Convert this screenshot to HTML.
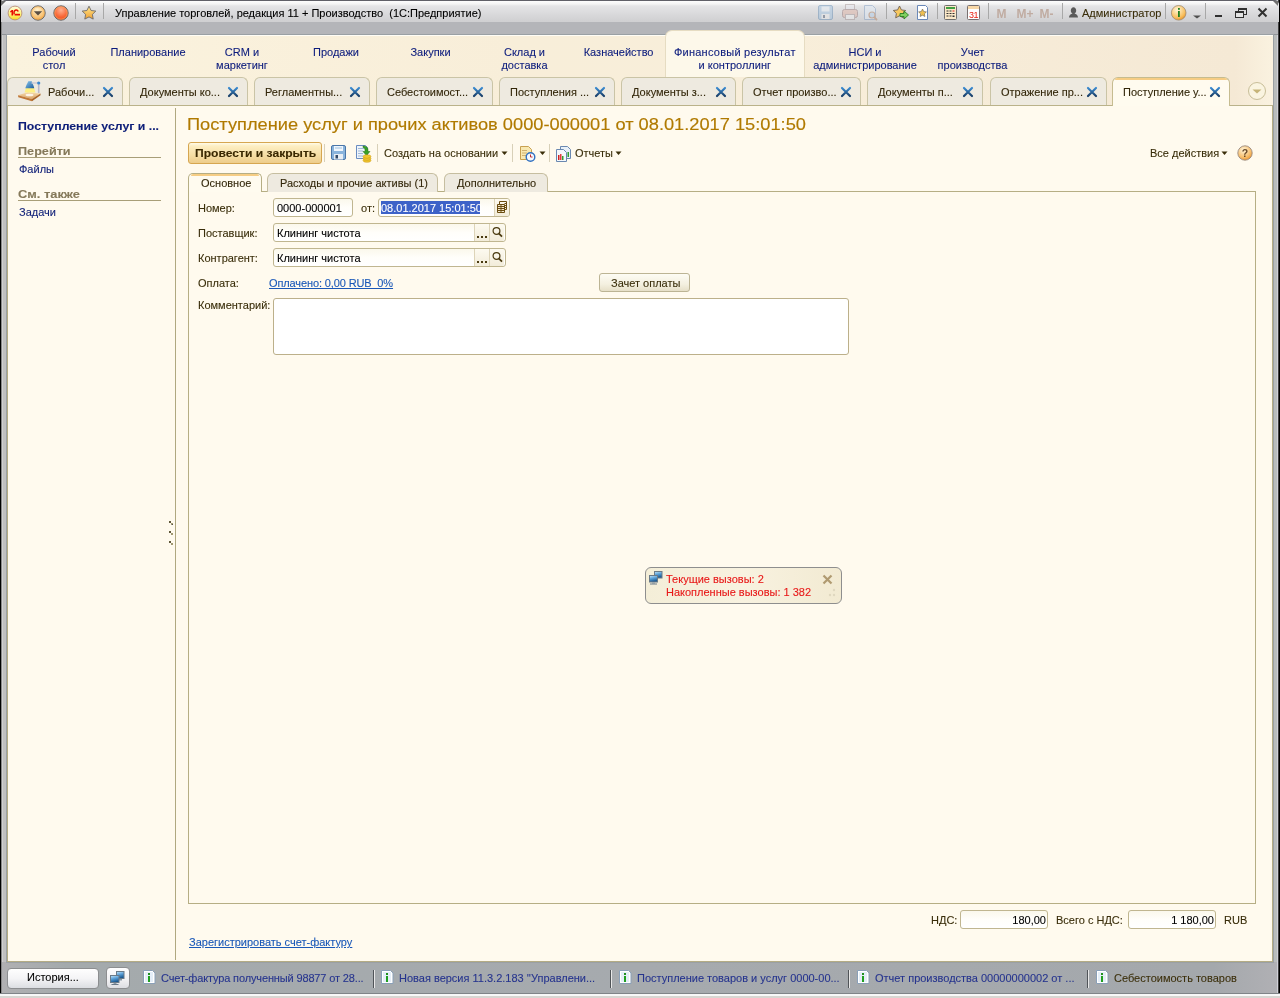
<!DOCTYPE html>
<html><head><meta charset="utf-8">
<style>
*{box-sizing:border-box;margin:0;padding:0}
html,body{width:1280px;height:998px;overflow:hidden}
body{position:relative;background:#b0b2b4;font-family:"Liberation Sans",sans-serif;font-size:11px;color:#3a2e0a}
.a{position:absolute}
svg{position:absolute;overflow:visible}
.t{position:absolute;white-space:pre;line-height:13px;font-size:11px}
/* frame */
#lb{left:0;top:0;width:6px;height:994px;background:linear-gradient(90deg,#000 0,#000 1px,#888 1px,#888 2px,#d0d0d0 2px,#d0d0d0 3px,#c0c0c0 3px)}
#rb{left:1274px;top:0;width:6px;height:994px;background:linear-gradient(90deg,#b8bcbc 0,#b8bcbc 3px,#d0d0d8 3px,#d0d0d8 4px,#404040 4px,#404040 5px,#000 5px)}
#tb{left:1px;top:0;width:1278px;height:22px;border-radius:5px 5px 0 0;background:linear-gradient(#606068 0,#606068 1px,#fdfdfd 1px,#f4f4f4 4px,#e4e4e6 6px,#d0d0d2 21px)}
#tb2{left:2px;top:22px;width:1276px;height:13px;background:#b4b5b9;border-bottom:1px solid #909498}
#lstrip{display:none}
#rstrip{display:none}
#panel{left:6px;top:34px;width:1268px;height:929px;background:#fffaee;border:1px solid #9aa0a4}
#panel2{left:7px;top:35px;width:1266px;height:927px;border:1px solid #b4ac84;border-top:none}
#sect{left:7px;top:35px;width:1266px;height:70px;background:linear-gradient(#fffdf6 0,#fffdf6 1px,transparent 1px),linear-gradient(90deg,#fbf3de,#f8eed9 40%,#f8eeda 60%,#f5e9d5 97%,#faf2e0)}
#status{left:2px;top:962px;width:1275px;height:31px;background:linear-gradient(90deg,#b0b0b2,#a4aaac 5%,#a6aaae 50%,#a4a8ac 95%,#b0b0b4)}
#sbot{left:0;top:993px;width:1280px;height:5px;background:linear-gradient(#808488 0,#808488 1px,#f8f8f8 1px,#f8f8f8 3px,#d8d6d2 3px)}
.sep{position:absolute;width:1px;background:#a0a0a0}
.sec{color:#0c1c7c;text-align:center}
#asec{left:665px;top:30px;width:140px;height:47px;background:#fdf8ea;border-radius:7px 7px 0 0;border:1px solid #e6dcc2;border-bottom:none}
#tabline{left:7px;top:105px;width:1266px;height:1px;background:#bab28a}
.tab{position:absolute;top:77px;height:28px;background:#eeeae0;border:1px solid #cac4a6;border-bottom:none;border-radius:6px 6px 0 0}
.tab .t{top:8px;left:10px;color:#33270a}
.tab .x{position:absolute;top:9px;width:10px;height:10px}
.atab{background:#fffbef;border-color:#c6bc90;height:29px}
.atab:before{content:"";position:absolute;left:2px;right:2px;top:0;height:2px;background:#f6cd84;border-radius:4px 4px 0 0}
.fld{border:1px solid #c0b690;border-radius:3px;background:linear-gradient(#fbf8ec,#fffefa 50%,#fff)}
.fbtn{position:absolute;border-left:1px solid #ddd4b8;background:linear-gradient(#fdfaf0,#f2ecda)}
.t{-webkit-text-stroke:0.1px currentColor}
.bx{font-weight:bold;transform-origin:0 0}
</style></head><body><div id="wrap" style="position:absolute;left:0;top:0;width:1280px;height:998px;will-change:transform">
<div id="lb" class="a"></div>
<div id="rb" class="a"></div>
<div id="tb" class="a"></div>
<div id="tb2" class="a"></div>
<div id="lstrip" class="a"></div>
<div id="rstrip" class="a"></div>
<div id="status" class="a"></div>
<div id="sbot" class="a"></div>
<div id="panel" class="a"></div>
<div id="panel2" class="a"></div>
<div id="sect" class="a"></div>

<!-- ===== TITLE BAR ===== -->
<svg style="left:0;top:0" width="110" height="26">
 <defs>
  <linearGradient id="g1c" x1="0" y1="0" x2="0" y2="1"><stop offset="0" stop-color="#fffce0"/><stop offset="0.55" stop-color="#fff480"/><stop offset="1" stop-color="#f8d820"/></linearGradient>
  <radialGradient id="gor" cx="0.45" cy="0.3" r="0.75"><stop offset="0" stop-color="#fff2d0"/><stop offset="0.7" stop-color="#f8c070"/><stop offset="1" stop-color="#e8983a"/></radialGradient>
  <radialGradient id="grd" cx="0.5" cy="0.3" r="0.75"><stop offset="0" stop-color="#ffb090"/><stop offset="0.6" stop-color="#f86838"/><stop offset="1" stop-color="#e84820"/></radialGradient>
  <linearGradient id="gst" x1="0" y1="0" x2="0" y2="1"><stop offset="0" stop-color="#ffe890"/><stop offset="1" stop-color="#f0a030"/></linearGradient>
 </defs>
  <circle cx="15" cy="13" r="6.9" fill="url(#g1c)" stroke="#b89078" stroke-width="0.9"/>
 <path d="M10.2 11.2l1.6-1.1h1.3v5.5h-1.6v-3.7l-1.3.5z" fill="#e80c00"/>
 <path d="M18.2 11.6c-.3-.9-1-1.5-2-1.5-1.2 0-2.2 1-2.2 2.6 0 .6.1 1 .3 1.4" fill="none" stroke="#e80c00" stroke-width="1.5"/>
 <rect x="14.6" y="13.8" width="5.4" height="1.7" fill="#e80c00"/>
 <circle cx="38" cy="13" r="7.2" fill="url(#gor)" stroke="#6a6a6a" stroke-width="1"/>
 <circle cx="38" cy="13" r="6.2" fill="none" stroke="#f8b050" stroke-width="0.8" opacity="0.7"/>
 <path d="M33.8 11.3h8.4l-4.2 4.3z" fill="#5a4e42"/>
 <circle cx="61" cy="13" r="7.2" fill="url(#grd)" stroke="#6a6a6a" stroke-width="1"/>
 <circle cx="61" cy="13" r="6.2" fill="none" stroke="#ffb060" stroke-width="0.8" opacity="0.7"/>
 <rect x="75" y="3" width="1" height="16" fill="#a8a8a8"/>
 <path d="M89 6.2l2.1 4.3 4.7.6-3.4 3.3.8 4.7-4.2-2.2-4.2 2.2.8-4.7-3.4-3.3 4.7-.6z" fill="url(#gst)" stroke="#6c6a6a" stroke-width="0.9" stroke-linejoin="round"/>
 <rect x="103" y="3" width="1" height="16" fill="#a8a8a8"/>
</svg>
<div class="t" style="left:115px;top:7px;color:#000">Управление торговлей, редакция 11 + Производство  (1С:Предприятие)</div>

<svg style="left:810px;top:0" width="470" height="26">
 <!-- floppy (disabled) -->
 <g opacity="0.45">
  <rect x="8.5" y="5.5" width="14" height="14" rx="1.5" fill="#9cc0e0" stroke="#5a86b0"/>
  <rect x="11.5" y="6.5" width="8" height="5" fill="#e8f0f8"/>
  <rect x="11.5" y="14" width="8" height="5" fill="#f0f0f0"/>
  <rect x="13" y="15" width="2" height="3" fill="#40506a"/>
 </g>
 <!-- printer -->
 <g opacity="0.45">
  <rect x="35.5" y="4.5" width="9" height="6" fill="#e8e8f0" stroke="#a09090"/>
  <rect x="32.5" y="9.5" width="15" height="8" rx="2" fill="#e0b0a0" stroke="#907070"/>
  <rect x="35.5" y="14.5" width="9" height="5" fill="#f4f4f4" stroke="#a09090"/>
 </g>
 <!-- preview -->
 <g opacity="0.45">
  <path d="M54.5 5.5h8l3 3v11h-11z" fill="#e0ecf8" stroke="#7898c0"/>
  <circle cx="62" cy="15" r="3" fill="#b0d0f0" stroke="#b07850" stroke-width="1.2"/>
  <path d="M64 17l3 3" stroke="#b07850" stroke-width="1.8"/>
 </g>
 <rect x="76" y="3" width="1" height="16" fill="#a8a8a8"/>
 <!-- star + arrow -->
 <path d="M89.5 6l1.9 3.9 4.3.6-3.1 3 .7 4.3-3.8-2-3.8 2 .7-4.3-3.1-3 4.3-.6z" fill="#f8c860" stroke="#706050" stroke-width="0.9" stroke-linejoin="round"/>
 <path d="M90 13.5h4v-2.5l4.5 4-4.5 4v-2.5h-4z" fill="#80d060" stroke="#2a8020" stroke-width="0.9"/>
 <!-- doc star -->
 <path d="M107.5 5.5h8l2 2v12h-10z" fill="#fff" stroke="#6a88b8"/>
 <path d="M112.5 9l1.2 2.5 2.7.4-2 1.9.5 2.7-2.4-1.3-2.4 1.3.5-2.7-2-1.9 2.7-.4z" fill="#f0c050" stroke="#6a6050" stroke-width="0.6"/>
 <rect x="127" y="3" width="1" height="16" fill="#a8a8a8"/>
 <!-- calculator -->
 <rect x="134.5" y="5.5" width="12" height="14" rx="1" fill="#fbe8c8" stroke="#707070"/>
 <rect x="136" y="7" width="9" height="2" fill="#40a040"/>
 <g fill="#303030"><rect x="136.5" y="10.5" width="2" height="1"/><rect x="139.5" y="10.5" width="2" height="1"/><rect x="142.5" y="10.5" width="2" height="1" fill="#e02020"/><rect x="136.5" y="13" width="2" height="1"/><rect x="139.5" y="13" width="2" height="1"/><rect x="142.5" y="13" width="2" height="1"/><rect x="136.5" y="15.5" width="2" height="1"/><rect x="139.5" y="15.5" width="2" height="1"/><rect x="142.5" y="15.5" width="2" height="1.5"/></g>
 <!-- calendar -->
 <rect x="157.5" y="5.5" width="12" height="14" rx="1" fill="#fff" stroke="#787070"/>
 <rect x="158" y="6" width="11" height="3" fill="#f8d8a8"/>
 <text x="163.5" y="17.8" text-anchor="middle" font-family="Liberation Sans" font-size="9" fill="#e82010" letter-spacing="-0.5">31</text>
 <rect x="178" y="3" width="1" height="16" fill="#a8a8a8"/>
 <g font-family="Liberation Sans" font-weight="bold" font-size="12" fill="#c0aca2">
  <text x="186.5" y="17.5">M</text><text x="206.5" y="17.5">M+</text><text x="229.5" y="17.5">M-</text>
 </g>
 <rect x="252" y="3" width="1" height="16" fill="#a8a8a8"/>
 <!-- user -->
 <path d="M259 17.5c0-2.6 1.8-3.6 3.6-3.8-1.2-.8-1.8-1.9-1.8-3.3 0-1.9 1.2-3.2 2.7-3.2s2.7 1.3 2.7 3.2c0 1.4-.6 2.5-1.8 3.3 1.8.2 3.6 1.2 3.6 3.8z" fill="#5a5a5a"/>
</svg>
<div class="t" style="left:1082px;top:7px;color:#3a2e0a">Администратор</div>
<svg style="left:1160px;top:0" width="120" height="26">
 <defs><radialGradient id="ginf" cx="0.4" cy="0.3" r="0.75"><stop offset="0" stop-color="#fff6d8"/><stop offset="0.7" stop-color="#f8c060"/><stop offset="1" stop-color="#e89020"/></radialGradient></defs>
 <rect x="5" y="3" width="1" height="16" fill="#a8a8a8"/>
 <circle cx="18.7" cy="12.8" r="7.3" fill="url(#ginf)" stroke="#a08a70" stroke-width="0.8"/>
 <rect x="18" y="11" width="1.8" height="6" fill="#208020"/><rect x="18" y="8" width="1.8" height="1.8" fill="#208020"/>
 <path d="M33 15.5h8l-4 3z" fill="#505050"/>
 <rect x="45" y="3" width="1" height="16" fill="#a8a8a8"/>
 <rect x="55" y="15" width="7" height="2" fill="#303030"/>
 <rect x="78.5" y="8.5" width="8" height="6" fill="none" stroke="#303030"/>
 <rect x="75.5" y="11.5" width="8" height="6" fill="#e4e4e4" stroke="#303030"/>
 <rect x="78" y="8" width="9" height="2" fill="#303030"/><rect x="75" y="11" width="9" height="2" fill="#303030"/>
 <path d="M98.5 8.5l8 8M106.5 8.5l-8 8" stroke="#303030" stroke-width="2"/>
</svg>

<!-- ===== SECTIONS ===== -->
<div id="asec" class="a"></div>
<div class="t sec" style="left:-16px;top:46px;width:140px">Рабочий
стол</div>
<div class="t sec" style="left:78px;top:46px;width:140px">Планирование</div>
<div class="t sec" style="left:172px;top:46px;width:140px">CRM и
маркетинг</div>
<div class="t sec" style="left:266px;top:46px;width:140px">Продажи</div>
<div class="t sec" style="left:360.5px;top:46px;width:140px">Закупки</div>
<div class="t sec" style="left:454.5px;top:46px;width:140px">Склад и
доставка</div>
<div class="t sec" style="left:548.6px;top:46px;width:140px">Казначейство</div>
<div class="t sec" style="left:664.8px;top:46px;width:140px"><span style="letter-spacing:0.25px">Финансовый результат</span>
и контроллинг</div>
<div class="t sec" style="left:795px;top:46px;width:140px">НСИ и
администрирование</div>
<div class="t sec" style="left:902.5px;top:46px;width:140px">Учет
производства</div>

<!-- ===== TABS ===== -->
<div id="tabline" class="a"></div>
<svg width="0" height="0" style="left:0;top:0"><defs><linearGradient id="gx" x1="0" y1="0" x2="0" y2="1"><stop offset="0" stop-color="#3a8ad0"/><stop offset="1" stop-color="#183e68"/></linearGradient></defs></svg>
<div class="tab" style="left:7px;width:116px"><svg style="left:10px;top:2px" width="26" height="24">
 <defs><linearGradient id="gwood" x1="0" y1="0" x2="0" y2="1"><stop offset="0" stop-color="#f6dcb0"/><stop offset="1" stop-color="#d8a060"/></linearGradient>
 <linearGradient id="gshade" x1="0" y1="0" x2="1" y2="1"><stop offset="0" stop-color="#8cc8f0"/><stop offset="1" stop-color="#1a5a98"/></linearGradient></defs>
 <path d="M0 15.3L9.5 12.2 22.5 13.6 14 19z" fill="url(#gwood)"/>
 <path d="M0 15.3L14 19v2.2L0.3 17.2z" fill="#c07838"/><path d="M14 19l8.5-5.4v1.6L14 21.2z" fill="#a86428"/>
 <ellipse cx="11.5" cy="15" rx="4" ry="1.3" fill="#fffaf0" opacity="0.9"/>
 <path d="M6.5 12.5L8 8h8l1.5 4.5z" fill="#fff070" opacity="0.85"/>
 <path d="M7.3 8.3C8 5.5 9 4 10.3 1.2h3.4c1 2.8 2 4.3 2.6 7.1z" fill="url(#gshade)"/>
 <rect x="13.5" y="2.3" width="6.5" height="1.4" fill="#c8c8d4"/>
 <rect x="19.9" y="4" width="1.6" height="9" fill="#b8b8c8"/>
 <circle cx="20.7" cy="3" r="1.6" fill="#3a8ad0"/>
</svg><div class="t" style="left:40px">Рабочи...</div><svg class="x" style="left:95px" width="10" height="10"><defs></defs><path d="M1 1l8 8M9 1l-8 8" stroke="url(#gx)" stroke-width="2.2" stroke-linecap="round"/></svg></div>
<div class="tab" style="left:129px;width:119px"><div class="t">Документы ко...</div><svg class="x" style="left:98px" width="10" height="10"><defs></defs><path d="M1 1l8 8M9 1l-8 8" stroke="url(#gx)" stroke-width="2.2" stroke-linecap="round"/></svg></div>
<div class="tab" style="left:254px;width:116px"><div class="t">Регламентны...</div><svg class="x" style="left:95px" width="10" height="10"><defs></defs><path d="M1 1l8 8M9 1l-8 8" stroke="url(#gx)" stroke-width="2.2" stroke-linecap="round"/></svg></div>
<div class="tab" style="left:376px;width:117px"><div class="t">Себестоимост...</div><svg class="x" style="left:96px" width="10" height="10"><defs></defs><path d="M1 1l8 8M9 1l-8 8" stroke="url(#gx)" stroke-width="2.2" stroke-linecap="round"/></svg></div>
<div class="tab" style="left:499px;width:116px"><div class="t">Поступления ...</div><svg class="x" style="left:95px" width="10" height="10"><defs></defs><path d="M1 1l8 8M9 1l-8 8" stroke="url(#gx)" stroke-width="2.2" stroke-linecap="round"/></svg></div>
<div class="tab" style="left:621px;width:115px"><div class="t">Документы з...</div><svg class="x" style="left:94px" width="10" height="10"><defs></defs><path d="M1 1l8 8M9 1l-8 8" stroke="url(#gx)" stroke-width="2.2" stroke-linecap="round"/></svg></div>
<div class="tab" style="left:742px;width:119px"><div class="t">Отчет произво...</div><svg class="x" style="left:98px" width="10" height="10"><defs></defs><path d="M1 1l8 8M9 1l-8 8" stroke="url(#gx)" stroke-width="2.2" stroke-linecap="round"/></svg></div>
<div class="tab" style="left:867px;width:116px"><div class="t">Документы п...</div><svg class="x" style="left:95px" width="10" height="10"><defs></defs><path d="M1 1l8 8M9 1l-8 8" stroke="url(#gx)" stroke-width="2.2" stroke-linecap="round"/></svg></div>
<div class="tab" style="left:990px;width:117px"><div class="t">Отражение пр...</div><svg class="x" style="left:96px" width="10" height="10"><defs></defs><path d="M1 1l8 8M9 1l-8 8" stroke="url(#gx)" stroke-width="2.2" stroke-linecap="round"/></svg></div>
<div class="tab atab" style="left:1112px;width:118px"><div class="t">Поступление у...</div><svg class="x" style="left:97px" width="10" height="10"><defs></defs><path d="M1 1l8 8M9 1l-8 8" stroke="url(#gx)" stroke-width="2.2" stroke-linecap="round"/></svg></div>


<svg style="left:1246px;top:80px" width="22" height="22"><circle cx="11" cy="11" r="8.5" fill="#faf4e0" stroke="#c8be98" stroke-width="1"/><path d="M6.5 9.5h9l-4.5 4z" fill="#c6b478"/></svg>
<div class="a" style="left:1px;top:1px;width:5px;height:5px;background:linear-gradient(135deg,#707070 0,#707070 45%,transparent 55%)"></div>
<div class="a" style="left:1273px;top:1px;width:5px;height:5px;background:linear-gradient(225deg,#707070 0,#707070 45%,transparent 55%)"></div>
<!-- ===== SIDEBAR ===== -->
<div class="t bx" style="left:18px;top:120px;color:#0e1e78;transform:scaleX(1.118)">Поступление услуг и ...</div>
<div class="t bx" style="left:18px;top:145px;color:#85795a;transform:scaleX(1.15)">Перейти</div>
<div class="a" style="left:18px;top:157px;width:143px;height:1px;background:#a89e78"></div>
<div class="t" style="left:19px;top:163px;color:#14247a">Файлы</div>
<div class="t bx" style="left:18px;top:188px;color:#85795a;transform:scaleX(1.17)">См. также</div>
<div class="a" style="left:18px;top:200px;width:143px;height:1px;background:#a89e78"></div>
<div class="t" style="left:19px;top:206px;color:#14247a">Задачи</div>
<div class="a" style="left:175px;top:108px;width:1px;height:852px;background:#b0a880"></div>
<svg style="left:168px;top:520px" width="8" height="30">
 <g fill="#a09870"><rect x="1" y="1" width="2" height="2" fill="#605838"/><rect x="3" y="3" width="2" height="2"/><rect x="4" y="4" width="1" height="1" fill="#505050"/>
 <rect x="1" y="11" width="2" height="2" fill="#605838"/><rect x="3" y="13" width="2" height="2"/>
 <rect x="1" y="21" width="2" height="2" fill="#605838"/><rect x="3" y="23" width="2" height="2"/></g>
</svg>

<!-- ===== FORM HEADER ===== -->
<div class="t" style="left:187px;top:115px;font-size:16px;line-height:20px;color:#b07a00;-webkit-text-stroke:0.15px #b07a00;transform:scaleX(1.14);transform-origin:0 0">Поступление услуг и прочих активов 0000-000001 от 08.01.2017 15:01:50</div>

<div class="a" style="left:188px;top:142px;width:134px;height:22px;border:1px solid #d6a650;border-radius:3px;background:linear-gradient(#fffbe8 0,#fdeec2 3px,#f6dea4 12px,#ecca88 21px)"></div>
<div class="t bx" style="left:195px;top:147px;color:#3a2800;transform:scaleX(1.1)">Провести и закрыть</div>
<div class="sep" style="left:324px;top:144px;height:18px;background:#d8d0b8"></div>
<svg style="left:330px;top:144px" width="18" height="18">
 <rect x="1.5" y="1.5" width="14" height="14" rx="1.5" fill="#8ab4dc" stroke="#4a76a8"/>
 <rect x="4" y="2" width="9" height="5" fill="#f0f6fc"/><rect x="5" y="3.5" width="7" height="1" fill="#9cc0e0"/>
 <rect x="4" y="10" width="9" height="5.5" fill="#e8eef4"/><rect x="5.5" y="11" width="2.5" height="3.5" fill="#304868"/>
</svg>
<svg style="left:355px;top:144px" width="18" height="19">
 <path d="M1.5 1.5h9l2 2v11h-11z" fill="#eef4fa" stroke="#6a8cc0"/>
 <g fill="#a0b8d8"><rect x="3" y="4" width="6" height="1"/><rect x="3" y="6.5" width="5" height="1"/><rect x="3" y="9" width="5" height="1"/><rect x="3" y="11.5" width="5" height="1"/></g>
 <path d="M8 2c3 0 5 1.5 5 4v1.5h2l-3.5 4-3.5-4h2V6c0-1.5-1-2.5-2-2.5z" fill="#38a028" stroke="#207010" stroke-width="0.5"/>
 <g fill="#f0c830" stroke="#c89010" stroke-width="0.5"><ellipse cx="12" cy="16.5" rx="4" ry="1.8"/><ellipse cx="12" cy="14.5" rx="4" ry="1.8"/><ellipse cx="12" cy="12.5" rx="4" ry="1.8"/></g>
</svg>
<div class="sep" style="left:377px;top:144px;height:18px;background:#d8d0b8"></div>
<div class="t" style="left:384px;top:147px">Создать на основании</div>
<svg style="left:500px;top:150px" width="8" height="6"><path d="M1.5 1.5h6l-3 3.5z" fill="#3a2e0a"/></svg>
<div class="sep" style="left:512px;top:144px;height:18px;background:#d8d0b8"></div>
<svg style="left:519px;top:145px" width="18" height="18">
 <path d="M1.5 1.5h8l3 3v10h-11z" fill="#f8e8b0" stroke="#c8a050"/>
 <g fill="#d0b070"><rect x="3" y="5" width="5" height="1"/><rect x="3" y="7.5" width="5" height="1"/><rect x="3" y="10" width="4" height="1"/></g>
 <circle cx="11.5" cy="12" r="4.3" fill="#f4f8ff" stroke="#3070c0" stroke-width="1.4"/>
 <path d="M11.5 9.5v2.5h2" stroke="#c03030" stroke-width="1" fill="none"/>
</svg>
<svg style="left:538px;top:150px" width="8" height="6"><path d="M1.5 1.5h6l-3 3.5z" fill="#3a2e0a"/></svg>
<div class="sep" style="left:549px;top:144px;height:18px;background:#d8d0b8"></div>
<svg style="left:555px;top:145px" width="18" height="18">
 <path d="M5.5 1.5h7l3 3v9h-10z" fill="#e8f0f8" stroke="#6a88b0"/>
 <path d="M1.5 4.5h7l3 3v9h-10z" fill="#f4f8fc" stroke="#6a88b0"/>
 <rect x="3" y="10" width="1.5" height="5" fill="#d02020"/><rect x="5" y="9" width="1.5" height="6" fill="#e04040"/><rect x="7" y="11" width="1.5" height="4" fill="#30a030"/>
 <rect x="12.5" y="7" width="1.5" height="5" fill="#30a030"/>
</svg>
<div class="t" style="left:575px;top:147px">Отчеты</div>
<svg style="left:614px;top:150px" width="8" height="6"><path d="M1.5 1.5h6l-3 3.5z" fill="#3a2e0a"/></svg>

<div class="t" style="left:1150px;top:147px">Все действия</div>
<svg style="left:1220px;top:150px" width="8" height="6"><path d="M1.5 1.5h6l-3 3.5z" fill="#3a2e0a"/></svg>
<svg style="left:1236px;top:145px" width="18" height="18">
 <defs><radialGradient id="ghelp" cx="0.4" cy="0.3" r="0.75"><stop offset="0" stop-color="#fff4d8"/><stop offset="0.65" stop-color="#f8c070"/><stop offset="1" stop-color="#e89028"/></radialGradient></defs>
 <circle cx="9" cy="8" r="7.2" fill="url(#ghelp)" stroke="#9a8a80" stroke-width="0.9"/>
 <text x="9" y="12" text-anchor="middle" font-family="Liberation Sans" font-weight="bold" font-size="10.5" fill="#6a4a28">?</text>
</svg>

<!-- ===== FORM TABS ===== -->
<div class="a" style="left:188px;top:191px;width:1068px;height:713px;border:1px solid #b6ae84"></div>
<div class="tab" style="left:267px;top:173px;width:171px;height:19px;border-color:#c6bea0"><div class="t" style="left:12px;top:3px">Расходы и прочие активы (1)</div></div>
<div class="tab" style="left:444px;top:173px;width:104px;height:19px;border-color:#c6bea0"><div class="t" style="left:12px;top:3px">Дополнительно</div></div>
<div class="tab atab" style="left:188px;top:173px;width:74px;height:19px;border-color:#b6ae84;border-radius:5px 5px 0 0"><div class="t" style="left:12px;top:3px">Основное</div></div>

<!-- ===== FIELDS ===== -->
<div class="t" style="left:198px;top:202px">Номер:</div>
<div class="a fld" style="left:273px;top:198px;width:80px;height:19px"></div>
<div class="t" style="left:277px;top:202px;color:#000">0000-000001</div>
<div class="t" style="left:361px;top:202px">от:</div>
<div class="a fld" style="left:378px;top:198px;width:132px;height:19px"></div>
<div class="a" style="left:381px;top:201px;width:99px;height:13px;background:#3d62c8"></div>
<div class="t" style="left:381px;top:202px;color:#fff">08.01.2017 15:01:50</div>
<div class="a" style="left:494px;top:199px;width:1px;height:17px;background:#d8d0b0"></div>
<div class="a fbtn" style="left:494px;top:199px;width:15px;height:17px;border-radius:0 2px 2px 0"></div><svg style="left:496px;top:201px" width="12" height="13"><g fill="none" stroke="#6a4c10" stroke-width="1"><path d="M3.5 0.5h7v8h-7z"/><path d="M1.5 3.5h7v8h-7z" fill="#f4ead0"/><path d="M1.5 5.5h7M1.5 7.5h7M1.5 9.5h7M5 3.5v8"/><path d="M8.5 2.5h2M8.5 4.5h2M8.5 6.5h2"/></g></svg>

<div class="t" style="left:198px;top:227px">Поставщик:</div>
<div class="a fld" style="left:273px;top:223px;width:233px;height:19px"></div>
<div class="t" style="left:277px;top:227px;color:#000">Клининг чистота</div>
<div class="a fbtn" style="left:474px;top:224px;width:15px;height:17px"></div>
<div class="a fbtn" style="left:489px;top:224px;width:15px;height:17px;border-radius:0 2px 2px 0"></div>
<svg style="left:477px;top:236px" width="12" height="3"><rect x="0" y="0" width="2" height="2" fill="#4a3a10"/><rect x="4" y="0" width="2" height="2" fill="#4a3a10"/><rect x="8" y="0" width="2" height="2" fill="#4a3a10"/></svg>
<svg style="left:491px;top:226px" width="14" height="12"><circle cx="5.5" cy="5" r="3.4" fill="none" stroke="#4a3a10" stroke-width="1.2"/><path d="M8 7.6l3 3" stroke="#4a3a10" stroke-width="1.8"/></svg>

<div class="t" style="left:198px;top:252px">Контрагент:</div>
<div class="a fld" style="left:273px;top:248px;width:233px;height:19px"></div>
<div class="t" style="left:277px;top:252px;color:#000">Клининг чистота</div>
<div class="a fbtn" style="left:474px;top:249px;width:15px;height:17px"></div>
<div class="a fbtn" style="left:489px;top:249px;width:15px;height:17px;border-radius:0 2px 2px 0"></div>
<svg style="left:477px;top:261px" width="12" height="3"><rect x="0" y="0" width="2" height="2" fill="#4a3a10"/><rect x="4" y="0" width="2" height="2" fill="#4a3a10"/><rect x="8" y="0" width="2" height="2" fill="#4a3a10"/></svg>
<svg style="left:491px;top:251px" width="14" height="12"><circle cx="5.5" cy="5" r="3.4" fill="none" stroke="#4a3a10" stroke-width="1.2"/><path d="M8 7.6l3 3" stroke="#4a3a10" stroke-width="1.8"/></svg>

<div class="t" style="left:198px;top:277px">Оплата:</div>
<div class="t" style="left:269px;top:277px;color:#1a58b8;text-decoration:underline;letter-spacing:-0.12px">Оплачено: 0,00 RUB  0%</div>
<div class="a" style="left:599px;top:273px;width:91px;height:19px;border:1px solid #bcb494;border-radius:3px;background:linear-gradient(#fdfcf4,#f4f0e0 60%,#e6dfc8)"></div>
<div class="t" style="left:611px;top:277px">Зачет оплаты</div>

<div class="t" style="left:198px;top:299px">Комментарий:</div>
<div class="a" style="left:273px;top:298px;width:576px;height:57px;border:1px solid #bcb08a;border-radius:3px;background:#fff"></div>

<!-- ===== POPUP ===== -->
<div class="a" style="left:645px;top:567px;width:197px;height:37px;border:1px solid #8e8e8e;border-radius:6px;background:linear-gradient(90deg,#f4eed8,#f8f2e0 50%,#f2ead2)"></div>
<svg style="left:648px;top:571px" width="16" height="16">
 <rect x="6.5" y="0.5" width="7.5" height="6.5" fill="url(#gscr)" stroke="#6a7a88"/>
 <rect x="1.5" y="4.5" width="8" height="6.5" fill="url(#gscr)" stroke="#6a7a88"/>
 <rect x="4" y="11.5" width="3" height="1" fill="#8a9aa8"/><rect x="2" y="12.5" width="7" height="1" fill="#6a7a88"/>
</svg>
<div class="t" style="left:666px;top:573px;color:#e81818">Текущие вызовы: 2
Накопленные вызовы: 1 382</div>
<svg style="left:822px;top:574px" width="12" height="12"><path d="M1.5 1.5l8 8M9.5 1.5l-8 8" stroke="#b09a70" stroke-width="2.2"/></svg>
<svg style="left:826px;top:588px" width="12" height="12"><g fill="#e0d8c0"><circle cx="8" cy="2" r="1.2"/><circle cx="4" cy="7" r="1.2"/><circle cx="8" cy="7" r="1.2"/></g></svg>

<!-- ===== FOOTER ===== -->
<div class="t" style="left:931px;top:914px">НДС:</div>
<div class="a fld" style="left:960px;top:910px;width:88px;height:19px"></div>
<div class="t" style="left:960px;top:914px;width:86px;text-align:right;color:#000">180,00</div>
<div class="t" style="left:1056px;top:914px">Всего с НДС:</div>
<div class="a fld" style="left:1128px;top:910px;width:88px;height:19px"></div>
<div class="t" style="left:1128px;top:914px;width:86px;text-align:right;color:#000">1 180,00</div>
<div class="t" style="left:1224px;top:914px">RUB</div>
<div class="t" style="left:189px;top:936px;color:#1a58b8;text-decoration:underline">Зарегистрировать счет-фактуру</div>

<!-- ===== STATUS BAR ===== -->
<div class="a" style="left:7px;top:968px;width:92px;height:21px;border:1px solid #8c8e90;border-radius:4px;background:linear-gradient(#fefefe,#f4f4f6 50%,#dcdee2)"></div>
<div class="t" style="left:27px;top:971px;color:#000">История...</div>
<div class="a" style="left:106px;top:967px;width:24px;height:22px;border:1px solid #8c8e90;border-radius:4px;background:linear-gradient(#fefefe,#f0f0f2 60%,#dcdee2)"></div>
<svg style="left:109px;top:971px" width="18" height="16">
 <defs><linearGradient id="gscr" x1="0" y1="0" x2="0.3" y2="1"><stop offset="0" stop-color="#c8e8fa"/><stop offset="0.5" stop-color="#5aa0d8"/><stop offset="1" stop-color="#1a5890"/></linearGradient></defs>
 <rect x="7.5" y="0.5" width="7.5" height="7" fill="url(#gscr)" stroke="#6a7a88"/>
 <rect x="10" y="8" width="3" height="1.5" fill="#8a9aa8"/>
 <rect x="1.5" y="4.5" width="8.5" height="7" fill="url(#gscr)" stroke="#6a7a88"/>
 <rect x="4.5" y="12" width="3" height="1" fill="#8a9aa8"/><rect x="2.5" y="13" width="7" height="1" fill="#6a7a88"/>
</svg>
<svg style="left:143px;top:970px" width="14" height="14"><path d="M0.5 0.5h9l2.5 2.5v10.5h-11.5z" fill="#fff" stroke="#8aa0b8"/><rect x="2" y="2" width="8" height="10" fill="#e4eef8"/><rect x="5" y="3" width="2" height="2" fill="#209020"/><rect x="5" y="6" width="2" height="6" fill="#20a020"/></svg>
<div class="t" style="left:161px;top:972px;color:#26348e;letter-spacing:-0.14px">Счет-фактура полученный 98877 от 28...</div>
<div class="a" style="left:373px;top:970px;width:2px;height:18px;background:linear-gradient(90deg,#505458 0,#505458 1px,#e8e8e8 1px)"></div>
<svg style="left:381px;top:970px" width="14" height="14"><path d="M0.5 0.5h9l2.5 2.5v10.5h-11.5z" fill="#fff" stroke="#8aa0b8"/><rect x="2" y="2" width="8" height="10" fill="#e4eef8"/><rect x="5" y="3" width="2" height="2" fill="#209020"/><rect x="5" y="6" width="2" height="6" fill="#20a020"/></svg>
<div class="t" style="left:399px;top:972px;color:#26348e">Новая версия 11.3.2.183 ''Управлени...</div>
<div class="a" style="left:610px;top:970px;width:2px;height:18px;background:linear-gradient(90deg,#505458 0,#505458 1px,#e8e8e8 1px)"></div>
<svg style="left:619px;top:970px" width="14" height="14"><path d="M0.5 0.5h9l2.5 2.5v10.5h-11.5z" fill="#fff" stroke="#8aa0b8"/><rect x="2" y="2" width="8" height="10" fill="#e4eef8"/><rect x="5" y="3" width="2" height="2" fill="#209020"/><rect x="5" y="6" width="2" height="6" fill="#20a020"/></svg>
<div class="t" style="left:637px;top:972px;color:#26348e">Поступление товаров и услуг 0000-00...</div>
<div class="a" style="left:848px;top:970px;width:2px;height:18px;background:linear-gradient(90deg,#505458 0,#505458 1px,#e8e8e8 1px)"></div>
<svg style="left:857px;top:970px" width="14" height="14"><path d="M0.5 0.5h9l2.5 2.5v10.5h-11.5z" fill="#fff" stroke="#8aa0b8"/><rect x="2" y="2" width="8" height="10" fill="#e4eef8"/><rect x="5" y="3" width="2" height="2" fill="#209020"/><rect x="5" y="6" width="2" height="6" fill="#20a020"/></svg>
<div class="t" style="left:875px;top:972px;color:#26348e">Отчет производства 00000000002 от ...</div>
<div class="a" style="left:1087px;top:970px;width:2px;height:18px;background:linear-gradient(90deg,#505458 0,#505458 1px,#e8e8e8 1px)"></div>
<svg style="left:1096px;top:970px" width="14" height="14"><path d="M0.5 0.5h9l2.5 2.5v10.5h-11.5z" fill="#fff" stroke="#8aa0b8"/><rect x="2" y="2" width="8" height="10" fill="#e4eef8"/><rect x="5" y="3" width="2" height="2" fill="#209020"/><rect x="5" y="6" width="2" height="6" fill="#20a020"/></svg>
<div class="t" style="left:1114px;top:972px;color:#3c300c">Себестоимость товаров</div>

</div></body></html>
